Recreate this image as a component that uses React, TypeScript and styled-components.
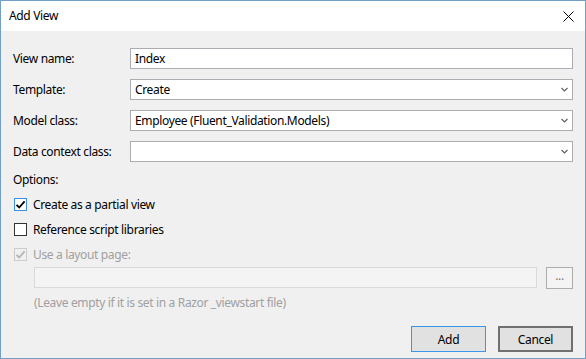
import React from 'react'
import styled, { createGlobalStyle } from 'styled-components'

const GlobalStyle = createGlobalStyle`
  html, body {
    margin: 0;
    padding: 0;
    background: #f0f0f0;
  }
  * {
    box-sizing: border-box;
  }
`

const Window = styled.div`
  width: 586px;
  height: 359px;
  display: flex;
  flex-direction: column;
  border: 1px solid #729fc6;
  background: #f0f0f0;
  font-family: 'Segoe UI', 'Noto Sans', sans-serif;
  font-size: 12px;
  letter-spacing: -0.35px;
  color: #000;
`

const TitleBar = styled.div`
  height: 30px;
  flex: none;
  display: flex;
  align-items: center;
  justify-content: space-between;
  padding: 0 9px 0 8px;
  background: #fff;
`

const Title = styled.span`
  font-size: 12px;
  line-height: 16px;
  color: #000;
`

const CloseButton = styled.button`
  width: 16px;
  height: 16px;
  display: flex;
  align-items: center;
  justify-content: center;
  padding: 0;
  border: none;
  background: transparent;
`

const Body = styled.div`
  flex: 1;
  display: flex;
  flex-direction: column;
  padding: 17px 12px 6px 12px;
`

const FormGrid = styled.div`
  display: grid;
  grid-template-columns: 117px 1fr;
  grid-auto-rows: 21px;
  row-gap: 10px;
  align-items: center;
`

const Label = styled.label`
  line-height: 16px;
`

const Field = styled.div`
  height: 21px;
  display: flex;
  align-items: center;
  padding: 0 4px 0 4px;
  background: #fff;
  border: 1px solid #abadb3;
  line-height: 16px;
`

const FieldText = styled.span`
  flex: 1;
`

const OptionsLabel = styled.div`
  margin-top: 10px;
  line-height: 16px;
`

const OptionList = styled.div`
  margin-top: 4px;
  display: flex;
  flex-direction: column;
`

const OptionRow = styled.label<{ $disabled?: boolean }>`
  height: 25px;
  display: flex;
  align-items: center;
  gap: 6px;
  padding-left: 1px;
  color: ${p => (p.$disabled ? '#a0a0a0' : '#000')};
`

const Box = styled.span<{ $tone: 'focus' | 'normal' | 'disabled' }>`
  width: 13px;
  height: 13px;
  flex: none;
  display: flex;
  align-items: center;
  justify-content: center;
  background: ${p => (p.$tone === 'disabled' ? '#f0f0f0' : '#fff')};
  border: 1px solid
    ${p => (p.$tone === 'focus' ? '#3c8fe6' : p.$tone === 'disabled' ? '#cccccc' : '#333333')};
`

const LayoutRow = styled.div`
  display: flex;
  gap: 9px;
  padding-left: 21px;
`

const DisabledField = styled.div`
  flex: 1;
  height: 21px;
  background: #f4f4f4;
  border: 1px solid #d9d9d9;
`

const BrowseButton = styled.button`
  width: 27px;
  height: 22px;
  padding: 0 0 4px 0;
  border: 1px solid #adadad;
  background: #f4f4f4;
  color: #7a7a7a;
  font-family: inherit;
  font-size: 12px;
  letter-spacing: inherit;
  line-height: 12px;
`

const Hint = styled.div`
  margin-top: 6px;
  padding-left: 21px;
  line-height: 16px;
  color: #a0a0a0;
`

const Footer = styled.div`
  margin-top: auto;
  display: flex;
  justify-content: flex-end;
  gap: 12px;
`

const DialogButton = styled.button<{ $default?: boolean }>`
  width: 75px;
  height: 26px;
  padding: 0;
  background: #e1e1e1;
  border: ${p => (p.$default ? '1px solid #3c96e8' : '2px solid #707070')};
  font-family: inherit;
  font-size: 12px;
  letter-spacing: inherit;
  color: #000;
`

const Chevron = () => (
  <svg width="7" height="5" viewBox="0 0 7 5">
    <path d="M0.5 1 L3.5 4 L6.5 1" fill="none" stroke="#606060" strokeWidth="1.2" />
  </svg>
)

const Check = ({ color }: { color: string }) => (
  <svg width="11" height="11" viewBox="0 0 11 11">
    <path d="M1.5 5.8 L4.2 8.5 L9.6 2.3" fill="none" stroke={color} strokeWidth="1.8" />
  </svg>
)

const fields: { label: string; value: string; select: boolean }[] = [
  { label: 'View name:', value: 'Index', select: false },
  { label: 'Template:', value: 'Create', select: true },
  { label: 'Model class:', value: 'Employee (Fluent_Validation.Models)', select: true },
  { label: 'Data context class:', value: '', select: true },
]

export default function App() {
  return (
    <>
      <GlobalStyle />
      <Window>
        <TitleBar>
          <Title>Add View</Title>
          <CloseButton aria-label="Close">
            <svg width="11" height="11" viewBox="0 0 11 11">
              <path d="M0.5 0.5 L10.5 10.5 M10.5 0.5 L0.5 10.5" stroke="#000" strokeWidth="1" />
            </svg>
          </CloseButton>
        </TitleBar>

        <Body>
          <FormGrid>
            {fields.map(f => (
              <React.Fragment key={f.label}>
                <Label>{f.label}</Label>
                <Field>
                  <FieldText>{f.value}</FieldText>
                  {f.select && <Chevron />}
                </Field>
              </React.Fragment>
            ))}
          </FormGrid>

          <OptionsLabel>Options:</OptionsLabel>
          <OptionList>
            <OptionRow>
              <Box $tone="focus">
                <Check color="#000" />
              </Box>
              Create as a partial view
            </OptionRow>
            <OptionRow>
              <Box $tone="normal" />
              Reference script libraries
            </OptionRow>
            <OptionRow $disabled>
              <Box $tone="disabled">
                <Check color="#b4b4b4" />
              </Box>
              Use a layout page:
            </OptionRow>
          </OptionList>

          <LayoutRow>
            <DisabledField />
            <BrowseButton>...</BrowseButton>
          </LayoutRow>
          <Hint>(Leave empty if it is set in a Razor _viewstart file)</Hint>

          <Footer>
            <DialogButton $default>Add</DialogButton>
            <DialogButton>Cancel</DialogButton>
          </Footer>
        </Body>
      </Window>
    </>
  )
}
